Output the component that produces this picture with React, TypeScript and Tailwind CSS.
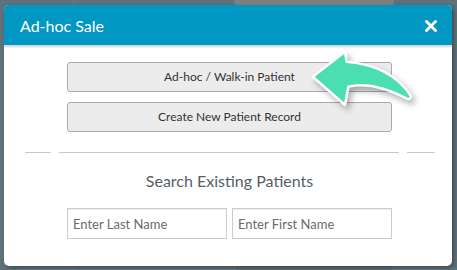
import React from "react";

export default function App() {
  return (
    <div className="relative w-[457px] h-[270px] overflow-hidden bg-[#5f727b] font-['Lato','Liberation_Sans',sans-serif]">
      {/* backdrop page columns */}
      <div className="flex h-full">
        <div className="w-[74px] h-full border-r border-[#4f8594]" />
        <div className="w-[161px] h-full border-r border-[#4f8594]" />
        <div className="w-[159px] h-full border-r border-[#4f8594] bg-[#5c6d75]">
          <div className="h-[6px] bg-[#7f7f7f]" />
        </div>
        <div className="flex-1 h-full" />
      </div>

      {/* modal */}
      <div className="absolute left-[4px] top-[5px] w-[448px] h-[261px] rounded-[5px] bg-white shadow-[2px_2px_4px_rgba(0,0,0,0.35)] flex flex-col overflow-hidden">
        <div className="relative z-10 h-[40px] shrink-0 bg-[#0097c3] flex items-center justify-between pl-[16px] pr-[15px] shadow-[0_2px_2px_rgba(0,0,0,0.18)]">
          <span className="text-white text-[16px] leading-[20px] mt-[1px]">Ad-hoc Sale</span>
          <svg width="12" height="12" viewBox="0 0 12 12" className="mt-[1px]">
            <path d="M1.5 1.5 L10.5 10.5 M10.5 1.5 L1.5 10.5" stroke="white" strokeWidth="2.8" strokeLinecap="square" />
          </svg>
        </div>

        <div className="flex flex-col pl-[63px] pr-[60px] pt-[17px] gap-[10px]">
          <button className="h-[30px] w-full rounded-[3px] border border-[#aaaaaa] bg-[#ececec] text-[12px] text-[#333] leading-none">
            Ad-hoc / Walk-in Patient
          </button>
          <button className="h-[30px] w-full rounded-[3px] border border-[#aaaaaa] bg-[#ececec] text-[12px] text-[#333] leading-none">
            Create New Patient Record
          </button>
        </div>

        <div className="flex items-center gap-[8px] pl-[21px] pr-[17px] mt-[20px]">
          <div className="w-[26px] h-[1px] bg-[#c8c8c8]" />
          <div className="flex-1 h-[1px] bg-[#c8c8c8]" />
          <div className="w-[28px] h-[1px] bg-[#c8c8c8]" />
        </div>

        <div className="mt-[18px] pl-[63px] pr-[60px] text-center text-[16px] leading-[20px] text-[#555e66]">
          Search Existing Patients
        </div>

        <div className="mt-[17px] pl-[63px] pr-[60px] flex gap-[5px]">
          <input
            placeholder="Enter Last Name"
            className="h-[31px] w-[160px] border border-[#cccccc] shadow-[inset_0_1px_1px_rgba(0,0,0,0.08)] px-[5px] text-[13px] text-[#333] placeholder:text-[#6b6b6b] outline-none"
          />
          <input
            placeholder="Enter First Name"
            className="h-[31px] w-[160px] border border-[#cccccc] shadow-[inset_0_1px_1px_rgba(0,0,0,0.08)] px-[5px] text-[13px] text-[#333] placeholder:text-[#6b6b6b] outline-none"
          />
        </div>
      </div>

      {/* annotation arrow */}
      <svg
        className="absolute left-[300px] top-[40px] drop-shadow-[3px_4px_3px_rgba(0,0,0,0.3)]"
        width="130"
        height="80"
        viewBox="0 0 130 80"
      >
        <path
          d="M12.7 36.7 L45 11.7 L46.7 21.7 Q91.6 25.6 111 56 Q110.5 59.5 107.7 59 Q72.5 40.6 48.3 46.7 L45 65 Z"
          fill="#4adeb0"
          stroke="white"
          strokeWidth="2.5"
          strokeLinejoin="round"
        />
      </svg>
    </div>
  );
}
